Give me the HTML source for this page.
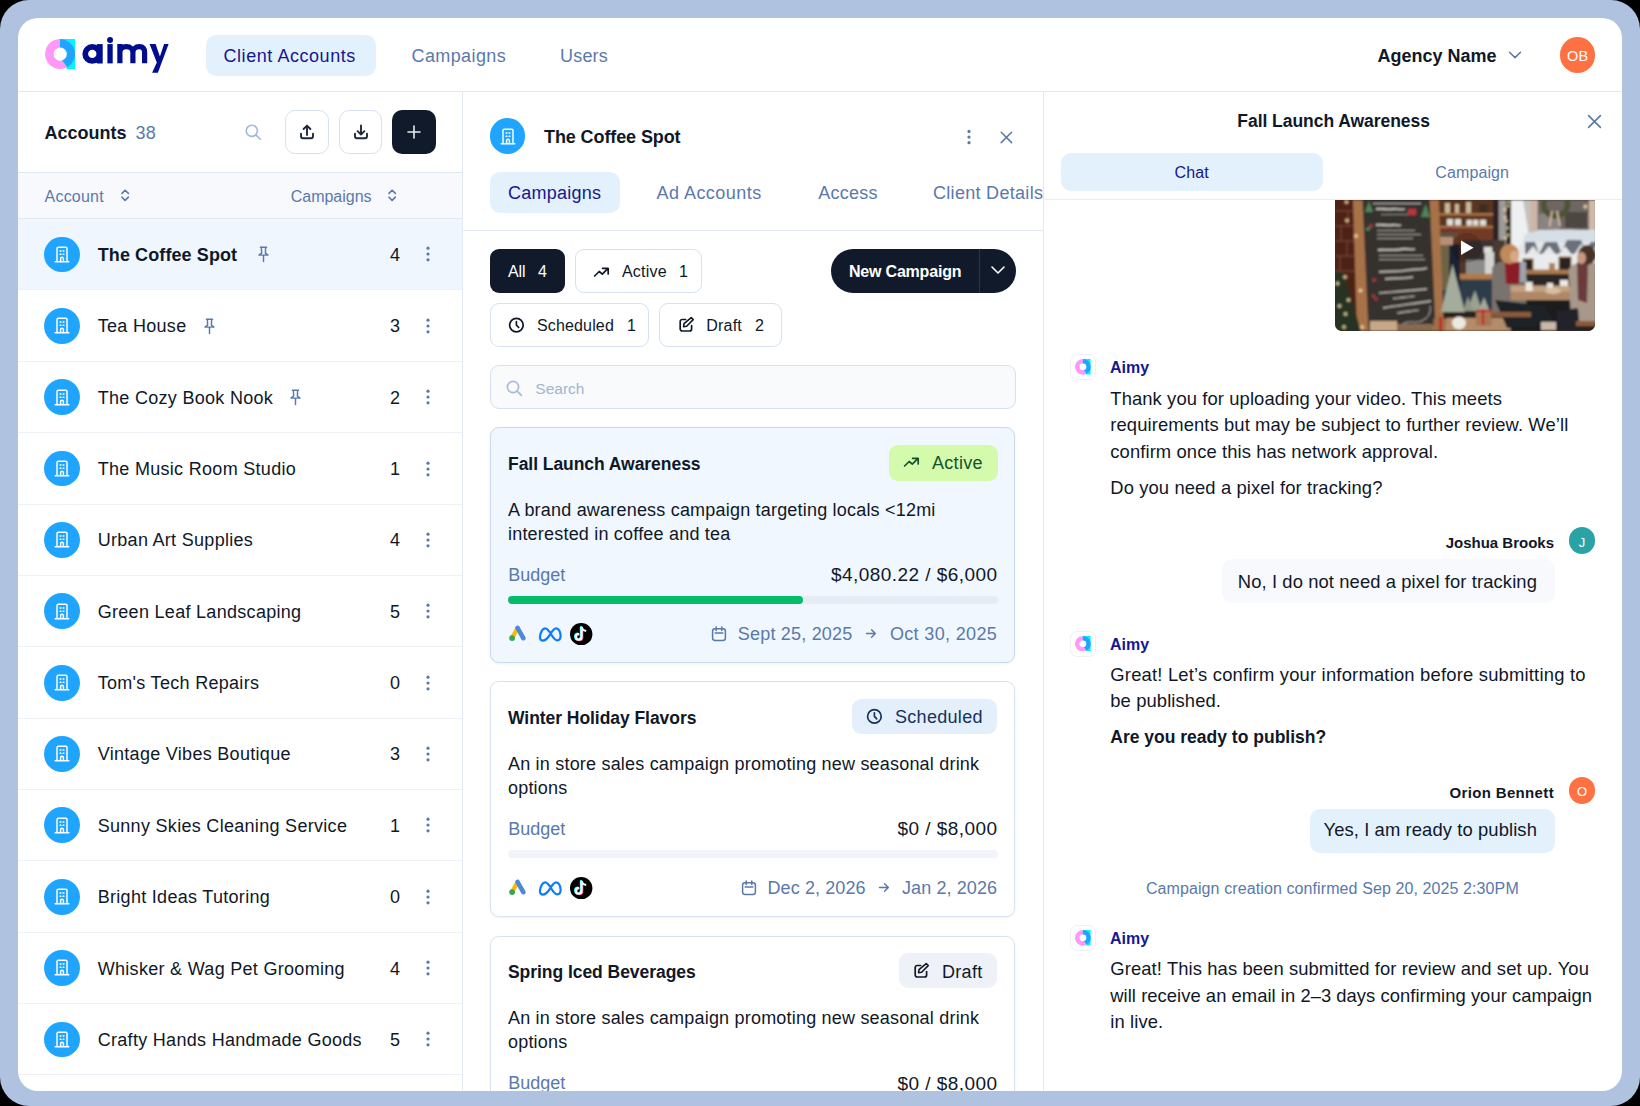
<!DOCTYPE html>
<html><head><meta charset="utf-8"><title>aimy</title>
<style>
html,body{margin:0;padding:0;}
body{width:1640px;height:1106px;overflow:hidden;background:#000;position:relative;font-family:"Liberation Sans",sans-serif;}
.frame{position:absolute;left:0;top:0;width:1640px;height:1106px;background:#afc3e1;border-radius:29px;}
.panel{position:absolute;left:18px;top:18px;width:1604px;height:1072.5px;background:#fff;border-radius:20px;overflow:hidden;}
.inner{position:absolute;left:-18px;top:-18px;width:1640px;height:1106px;}
.t{position:absolute;line-height:1;white-space:nowrap;}
.b{position:absolute;display:block;}
</style></head><body>
<div class="frame"></div>
<div class="panel"><div class="inner">
<svg class="b" style="left:45px;top:38.8px" width="30" height="30" viewBox="0 0 30 30"><g transform="scale(1.0)"><path d="M15 0 H30 V30 H21.5 V15 H15 Z" fill="#00f5ff"/><path d="M15 0 A15 15 0 1 0 22.2 28.2 L16.6 21.1 Z" fill="#ff99f7"/><path d="M15 0 A15 15 0 0 1 22.2 28.2 L16.6 21.1 L15 8.4 Z" fill="#1fa5ff"/><circle cx="15.2" cy="15.1" r="6.6" fill="#fff"/></g></svg>
<svg class="b" style="left:78px;top:34px" width="94" height="42" viewBox="0 0 94 42"><g fill="#000d8c" transform="translate(-78,-34)"><circle cx="92.3" cy="53.9" r="7.05" fill="none" stroke="#000d8c" stroke-width="5.7"/><rect x="96.9" y="44.1" width="5.8" height="19.4"/><rect x="107.4" y="44.1" width="5.3" height="19.3"/><circle cx="110.05" cy="39.9" r="3"/><path d="M119.9 63.3 V44.1 M119.9 52.6 C119.9 49 122.4 46.7 126.4 46.7 C130.4 46.7 132.9 49 132.9 52.6 V63.3 M132.9 52.6 C132.9 49 135.4 46.7 139.4 46.7 C143.4 46.7 144.6 49 144.6 52.6 V63.3" fill="none" stroke="#000d8c" stroke-width="5.2"/><path d="M149.6 44.1 H155.6 L159.9 56.6 L164.1 44.1 H168.6 L157.9 72.7 H152.1 L156.8 62.6 Z"/></g></svg>
<div class="b" style="left:206px;top:34.5px;width:170px;height:41px;background:#e3f1fd;border-radius:10px;"></div>
<div class="t" style="top:46.56px;font-size:18px;font-weight:400;color:#16178f;letter-spacing:0.55px;left:223.5px;">Client Accounts</div>
<div class="t" style="top:46.56px;font-size:18px;font-weight:400;color:#5a79ab;letter-spacing:0.4px;left:411.5px;">Campaigns</div>
<div class="t" style="top:46.56px;font-size:18px;font-weight:400;color:#5a79ab;letter-spacing:0.2px;left:560px;">Users</div>
<div class="t" style="top:46.86px;font-size:18px;font-weight:700;color:#101828;left:1377.5px;">Agency Name</div>
<svg class="b" style="left:1508px;top:50px" width="14" height="10" viewBox="0 0 14 10"><path d="M1.5 2.2 L7 7.6 L12.5 2.2" fill="none" stroke="#5a79ab" stroke-width="1.5" stroke-linecap="round" stroke-linejoin="round"/></svg>
<div class="b" style="left:1559.8px;top:37.2px;width:35.6px;height:35.6px;background:#ff7043;border-radius:50%;"></div>
<div class="t" style="top:48.53px;font-size:14.5px;font-weight:400;color:#fff;letter-spacing:0.2px;left:1177.6px;width:800px;text-align:center;">OB</div>
<div class="b" style="left:18px;top:91px;width:1604px;height:1px;background:#dfe7f2;"></div>
<div class="b" style="left:462px;top:91px;width:1px;height:1000px;background:#e3e9f2;"></div>
<div class="t" style="top:123.76px;font-size:18px;font-weight:700;color:#101828;left:44.6px;">Accounts</div>
<div class="t" style="top:123.76px;font-size:18px;font-weight:400;color:#5a79ab;letter-spacing:0.3px;left:135.5px;">38</div>
<svg class="b" style="left:245px;top:124px" width="17" height="17" viewBox="0 0 17 17"><circle cx="6.8" cy="6.8" r="5.6" fill="none" stroke="#a2b7d8" stroke-width="1.6"/><path d="M10.9 10.9 L15.3 15.3" stroke="#a2b7d8" stroke-width="1.6" stroke-linecap="round"/></svg>
<div class="b" style="left:285px;top:110px;width:43.6px;height:43.6px;box-sizing:border-box;border:1px solid #d6e1f1;border-radius:10px;background:#fff;"></div>
<div class="b" style="left:338.8px;top:110px;width:43.6px;height:43.6px;box-sizing:border-box;border:1px solid #d6e1f1;border-radius:10px;background:#fff;"></div>
<svg class="b" style="left:299px;top:124px" width="16" height="16" viewBox="0 0 16 16"><path d="M2 9.8 V12.2 A2 2 0 0 0 4 14.2 H12 A2 2 0 0 0 14 12.2 V9.8" fill="none" stroke="#1e293b" stroke-width="1.9" stroke-linecap="round"/><path d="M8 11 V1.6 M4.6 5 L8 1.6 L11.4 5" fill="none" stroke="#1e293b" stroke-width="1.9" stroke-linecap="round" stroke-linejoin="round"/></svg>
<svg class="b" style="left:352.8px;top:124px" width="16" height="16" viewBox="0 0 16 16"><path d="M2 9.8 V12.2 A2 2 0 0 0 4 14.2 H12 A2 2 0 0 0 14 12.2 V9.8" fill="none" stroke="#1e293b" stroke-width="1.9" stroke-linecap="round"/><path d="M8 1.4 V10.6 M4.6 7.2 L8 10.6 L11.4 7.2" fill="none" stroke="#1e293b" stroke-width="1.9" stroke-linecap="round" stroke-linejoin="round"/></svg>
<div class="b" style="left:391.8px;top:109.8px;width:44px;height:44px;background:#111a2b;border-radius:10px;"></div>
<svg class="b" style="left:405.8px;top:124px" width="16" height="16" viewBox="0 0 16 16"><path d="M8 2 V14 M2 8 H14" stroke="#e8ebf0" stroke-width="1.6" stroke-linecap="round"/></svg>
<div class="b" style="left:18px;top:172px;width:444px;height:1px;background:#e3e9f2;"></div>
<div class="b" style="left:18px;top:173px;width:444px;height:45px;background:#f7f9fc;"></div>
<div class="b" style="left:18px;top:218px;width:444px;height:1px;background:#e3e9f2;"></div>
<div class="t" style="top:188.96px;font-size:16px;font-weight:400;color:#5a79ab;letter-spacing:0.2px;left:44.6px;">Account</div>
<div class="t" style="top:188.96px;font-size:16px;font-weight:400;color:#5a79ab;left:290.7px;">Campaigns</div>
<svg class="b" style="left:120.2px;top:189px" width="10.4" height="12.6" viewBox="0 0 10.4 12.6"><path d="M2 4.4 L5.1 1.2 L8.4 4.4 M2 8.2 L5.1 11.4 L8.4 8.2" fill="none" stroke="#5a79ab" stroke-width="1.6" stroke-linecap="round" stroke-linejoin="round"/></svg>
<svg class="b" style="left:386.5px;top:189px" width="10.4" height="12.6" viewBox="0 0 10.4 12.6"><path d="M2 4.4 L5.1 1.2 L8.4 4.4 M2 8.2 L5.1 11.4 L8.4 8.2" fill="none" stroke="#5a79ab" stroke-width="1.6" stroke-linecap="round" stroke-linejoin="round"/></svg>
<div class="b" style="left:18px;top:219.1px;width:444px;height:70.36px;background:#eff6fe;"></div>
<div class="b" style="left:18px;top:289.46px;width:444px;height:1px;background:#edf1f7;"></div>
<div class="b" style="left:43.800000000000004px;top:236.57999999999998px;width:35.8px;height:35.8px;background:#1fa5ff;border-radius:50%;"></div>
<svg class="b" style="left:53.7px;top:245.88px" width="16.0" height="17.0" viewBox="0 0 16.0 17.0"><g transform="scale(1.0)" fill="none" stroke="#fff" stroke-width="1.45" stroke-linecap="round" stroke-linejoin="round"><path d="M3 15.6 V2.6 A1.3 1.3 0 0 1 4.3 1.3 H11.7 A1.3 1.3 0 0 1 13 2.6 V15.6"/><path d="M1.2 15.8 H14.8"/><path d="M6.1 4.9 H6.9 M9.1 4.9 H9.9 M6.1 8.2 H6.9 M9.1 8.2 H9.9"/><path d="M6.6 15.6 V12.6 A1.4 1.4 0 0 1 9.4 12.6 V15.6"/></g></svg>
<div class="t" style="top:245.94px;font-size:18px;font-weight:700;color:#101828;letter-spacing:0.1px;left:97.7px;">The Coffee Spot</div>
<svg class="b" style="left:256.5px;top:246.48px" width="13" height="17" viewBox="0 0 13 17"><path d="M3.4 1.2 H9.6 M4.4 1.4 L4.6 7.2 L2 9.1 H11 L8.4 7.2 L8.6 1.4 M6.5 9.4 V15.6" fill="none" stroke="#5a79ab" stroke-width="1.45" stroke-linecap="round" stroke-linejoin="round"/></svg>
<div class="t" style="top:245.94px;font-size:18px;font-weight:400;color:#101828;right:1240px;text-align:right;">4</div>
<svg class="b" style="left:424.5px;top:246.48px" width="6" height="16" viewBox="0 0 6 16"><circle cx="3" cy="2.2" r="1.6" fill="#5a79ab"/><circle cx="3" cy="8" r="1.6" fill="#5a79ab"/><circle cx="3" cy="13.8" r="1.6" fill="#5a79ab"/></svg>
<div class="b" style="left:18px;top:360.82px;width:444px;height:1px;background:#edf1f7;"></div>
<div class="b" style="left:43.800000000000004px;top:307.94px;width:35.8px;height:35.8px;background:#1fa5ff;border-radius:50%;"></div>
<svg class="b" style="left:53.7px;top:317.23999999999995px" width="16.0" height="17.0" viewBox="0 0 16.0 17.0"><g transform="scale(1.0)" fill="none" stroke="#fff" stroke-width="1.45" stroke-linecap="round" stroke-linejoin="round"><path d="M3 15.6 V2.6 A1.3 1.3 0 0 1 4.3 1.3 H11.7 A1.3 1.3 0 0 1 13 2.6 V15.6"/><path d="M1.2 15.8 H14.8"/><path d="M6.1 4.9 H6.9 M9.1 4.9 H9.9 M6.1 8.2 H6.9 M9.1 8.2 H9.9"/><path d="M6.6 15.6 V12.6 A1.4 1.4 0 0 1 9.4 12.6 V15.6"/></g></svg>
<div class="t" style="top:317.30px;font-size:18px;font-weight:400;color:#101828;letter-spacing:0.3px;left:97.7px;">Tea House</div>
<svg class="b" style="left:202.5px;top:317.84px" width="13" height="17" viewBox="0 0 13 17"><path d="M3.4 1.2 H9.6 M4.4 1.4 L4.6 7.2 L2 9.1 H11 L8.4 7.2 L8.6 1.4 M6.5 9.4 V15.6" fill="none" stroke="#5a79ab" stroke-width="1.45" stroke-linecap="round" stroke-linejoin="round"/></svg>
<div class="t" style="top:317.30px;font-size:18px;font-weight:400;color:#101828;right:1240px;text-align:right;">3</div>
<svg class="b" style="left:424.5px;top:317.84px" width="6" height="16" viewBox="0 0 6 16"><circle cx="3" cy="2.2" r="1.6" fill="#5a79ab"/><circle cx="3" cy="8" r="1.6" fill="#5a79ab"/><circle cx="3" cy="13.8" r="1.6" fill="#5a79ab"/></svg>
<div class="b" style="left:18px;top:432.18px;width:444px;height:1px;background:#edf1f7;"></div>
<div class="b" style="left:43.800000000000004px;top:379.3px;width:35.8px;height:35.8px;background:#1fa5ff;border-radius:50%;"></div>
<svg class="b" style="left:53.7px;top:388.59999999999997px" width="16.0" height="17.0" viewBox="0 0 16.0 17.0"><g transform="scale(1.0)" fill="none" stroke="#fff" stroke-width="1.45" stroke-linecap="round" stroke-linejoin="round"><path d="M3 15.6 V2.6 A1.3 1.3 0 0 1 4.3 1.3 H11.7 A1.3 1.3 0 0 1 13 2.6 V15.6"/><path d="M1.2 15.8 H14.8"/><path d="M6.1 4.9 H6.9 M9.1 4.9 H9.9 M6.1 8.2 H6.9 M9.1 8.2 H9.9"/><path d="M6.6 15.6 V12.6 A1.4 1.4 0 0 1 9.4 12.6 V15.6"/></g></svg>
<div class="t" style="top:388.66px;font-size:18px;font-weight:400;color:#101828;letter-spacing:0.3px;left:97.7px;">The Cozy Book Nook</div>
<svg class="b" style="left:288.5px;top:389.2px" width="13" height="17" viewBox="0 0 13 17"><path d="M3.4 1.2 H9.6 M4.4 1.4 L4.6 7.2 L2 9.1 H11 L8.4 7.2 L8.6 1.4 M6.5 9.4 V15.6" fill="none" stroke="#5a79ab" stroke-width="1.45" stroke-linecap="round" stroke-linejoin="round"/></svg>
<div class="t" style="top:388.66px;font-size:18px;font-weight:400;color:#101828;right:1240px;text-align:right;">2</div>
<svg class="b" style="left:424.5px;top:389.2px" width="6" height="16" viewBox="0 0 6 16"><circle cx="3" cy="2.2" r="1.6" fill="#5a79ab"/><circle cx="3" cy="8" r="1.6" fill="#5a79ab"/><circle cx="3" cy="13.8" r="1.6" fill="#5a79ab"/></svg>
<div class="b" style="left:18px;top:503.53999999999996px;width:444px;height:1px;background:#edf1f7;"></div>
<div class="b" style="left:43.800000000000004px;top:450.65999999999997px;width:35.8px;height:35.8px;background:#1fa5ff;border-radius:50%;"></div>
<svg class="b" style="left:53.7px;top:459.9599999999999px" width="16.0" height="17.0" viewBox="0 0 16.0 17.0"><g transform="scale(1.0)" fill="none" stroke="#fff" stroke-width="1.45" stroke-linecap="round" stroke-linejoin="round"><path d="M3 15.6 V2.6 A1.3 1.3 0 0 1 4.3 1.3 H11.7 A1.3 1.3 0 0 1 13 2.6 V15.6"/><path d="M1.2 15.8 H14.8"/><path d="M6.1 4.9 H6.9 M9.1 4.9 H9.9 M6.1 8.2 H6.9 M9.1 8.2 H9.9"/><path d="M6.6 15.6 V12.6 A1.4 1.4 0 0 1 9.4 12.6 V15.6"/></g></svg>
<div class="t" style="top:460.02px;font-size:18px;font-weight:400;color:#101828;letter-spacing:0.3px;left:97.7px;">The Music Room Studio</div>
<div class="t" style="top:460.02px;font-size:18px;font-weight:400;color:#101828;right:1240px;text-align:right;">1</div>
<svg class="b" style="left:424.5px;top:460.55999999999995px" width="6" height="16" viewBox="0 0 6 16"><circle cx="3" cy="2.2" r="1.6" fill="#5a79ab"/><circle cx="3" cy="8" r="1.6" fill="#5a79ab"/><circle cx="3" cy="13.8" r="1.6" fill="#5a79ab"/></svg>
<div class="b" style="left:18px;top:574.9px;width:444px;height:1px;background:#edf1f7;"></div>
<div class="b" style="left:43.800000000000004px;top:522.02px;width:35.8px;height:35.8px;background:#1fa5ff;border-radius:50%;"></div>
<svg class="b" style="left:53.7px;top:531.3199999999999px" width="16.0" height="17.0" viewBox="0 0 16.0 17.0"><g transform="scale(1.0)" fill="none" stroke="#fff" stroke-width="1.45" stroke-linecap="round" stroke-linejoin="round"><path d="M3 15.6 V2.6 A1.3 1.3 0 0 1 4.3 1.3 H11.7 A1.3 1.3 0 0 1 13 2.6 V15.6"/><path d="M1.2 15.8 H14.8"/><path d="M6.1 4.9 H6.9 M9.1 4.9 H9.9 M6.1 8.2 H6.9 M9.1 8.2 H9.9"/><path d="M6.6 15.6 V12.6 A1.4 1.4 0 0 1 9.4 12.6 V15.6"/></g></svg>
<div class="t" style="top:531.38px;font-size:18px;font-weight:400;color:#101828;letter-spacing:0.3px;left:97.7px;">Urban Art Supplies</div>
<div class="t" style="top:531.38px;font-size:18px;font-weight:400;color:#101828;right:1240px;text-align:right;">4</div>
<svg class="b" style="left:424.5px;top:531.92px" width="6" height="16" viewBox="0 0 6 16"><circle cx="3" cy="2.2" r="1.6" fill="#5a79ab"/><circle cx="3" cy="8" r="1.6" fill="#5a79ab"/><circle cx="3" cy="13.8" r="1.6" fill="#5a79ab"/></svg>
<div class="b" style="left:18px;top:646.26px;width:444px;height:1px;background:#edf1f7;"></div>
<div class="b" style="left:43.800000000000004px;top:593.38px;width:35.8px;height:35.8px;background:#1fa5ff;border-radius:50%;"></div>
<svg class="b" style="left:53.7px;top:602.68px" width="16.0" height="17.0" viewBox="0 0 16.0 17.0"><g transform="scale(1.0)" fill="none" stroke="#fff" stroke-width="1.45" stroke-linecap="round" stroke-linejoin="round"><path d="M3 15.6 V2.6 A1.3 1.3 0 0 1 4.3 1.3 H11.7 A1.3 1.3 0 0 1 13 2.6 V15.6"/><path d="M1.2 15.8 H14.8"/><path d="M6.1 4.9 H6.9 M9.1 4.9 H9.9 M6.1 8.2 H6.9 M9.1 8.2 H9.9"/><path d="M6.6 15.6 V12.6 A1.4 1.4 0 0 1 9.4 12.6 V15.6"/></g></svg>
<div class="t" style="top:602.74px;font-size:18px;font-weight:400;color:#101828;letter-spacing:0.3px;left:97.7px;">Green Leaf Landscaping</div>
<div class="t" style="top:602.74px;font-size:18px;font-weight:400;color:#101828;right:1240px;text-align:right;">5</div>
<svg class="b" style="left:424.5px;top:603.28px" width="6" height="16" viewBox="0 0 6 16"><circle cx="3" cy="2.2" r="1.6" fill="#5a79ab"/><circle cx="3" cy="8" r="1.6" fill="#5a79ab"/><circle cx="3" cy="13.8" r="1.6" fill="#5a79ab"/></svg>
<div class="b" style="left:18px;top:717.62px;width:444px;height:1px;background:#edf1f7;"></div>
<div class="b" style="left:43.800000000000004px;top:664.74px;width:35.8px;height:35.8px;background:#1fa5ff;border-radius:50%;"></div>
<svg class="b" style="left:53.7px;top:674.04px" width="16.0" height="17.0" viewBox="0 0 16.0 17.0"><g transform="scale(1.0)" fill="none" stroke="#fff" stroke-width="1.45" stroke-linecap="round" stroke-linejoin="round"><path d="M3 15.6 V2.6 A1.3 1.3 0 0 1 4.3 1.3 H11.7 A1.3 1.3 0 0 1 13 2.6 V15.6"/><path d="M1.2 15.8 H14.8"/><path d="M6.1 4.9 H6.9 M9.1 4.9 H9.9 M6.1 8.2 H6.9 M9.1 8.2 H9.9"/><path d="M6.6 15.6 V12.6 A1.4 1.4 0 0 1 9.4 12.6 V15.6"/></g></svg>
<div class="t" style="top:674.10px;font-size:18px;font-weight:400;color:#101828;letter-spacing:0.3px;left:97.7px;">Tom's Tech Repairs</div>
<div class="t" style="top:674.10px;font-size:18px;font-weight:400;color:#101828;right:1240px;text-align:right;">0</div>
<svg class="b" style="left:424.5px;top:674.64px" width="6" height="16" viewBox="0 0 6 16"><circle cx="3" cy="2.2" r="1.6" fill="#5a79ab"/><circle cx="3" cy="8" r="1.6" fill="#5a79ab"/><circle cx="3" cy="13.8" r="1.6" fill="#5a79ab"/></svg>
<div class="b" style="left:18px;top:788.98px;width:444px;height:1px;background:#edf1f7;"></div>
<div class="b" style="left:43.800000000000004px;top:736.1px;width:35.8px;height:35.8px;background:#1fa5ff;border-radius:50%;"></div>
<svg class="b" style="left:53.7px;top:745.4px" width="16.0" height="17.0" viewBox="0 0 16.0 17.0"><g transform="scale(1.0)" fill="none" stroke="#fff" stroke-width="1.45" stroke-linecap="round" stroke-linejoin="round"><path d="M3 15.6 V2.6 A1.3 1.3 0 0 1 4.3 1.3 H11.7 A1.3 1.3 0 0 1 13 2.6 V15.6"/><path d="M1.2 15.8 H14.8"/><path d="M6.1 4.9 H6.9 M9.1 4.9 H9.9 M6.1 8.2 H6.9 M9.1 8.2 H9.9"/><path d="M6.6 15.6 V12.6 A1.4 1.4 0 0 1 9.4 12.6 V15.6"/></g></svg>
<div class="t" style="top:745.46px;font-size:18px;font-weight:400;color:#101828;letter-spacing:0.3px;left:97.7px;">Vintage Vibes Boutique</div>
<div class="t" style="top:745.46px;font-size:18px;font-weight:400;color:#101828;right:1240px;text-align:right;">3</div>
<svg class="b" style="left:424.5px;top:746.0px" width="6" height="16" viewBox="0 0 6 16"><circle cx="3" cy="2.2" r="1.6" fill="#5a79ab"/><circle cx="3" cy="8" r="1.6" fill="#5a79ab"/><circle cx="3" cy="13.8" r="1.6" fill="#5a79ab"/></svg>
<div class="b" style="left:18px;top:860.34px;width:444px;height:1px;background:#edf1f7;"></div>
<div class="b" style="left:43.800000000000004px;top:807.46px;width:35.8px;height:35.8px;background:#1fa5ff;border-radius:50%;"></div>
<svg class="b" style="left:53.7px;top:816.76px" width="16.0" height="17.0" viewBox="0 0 16.0 17.0"><g transform="scale(1.0)" fill="none" stroke="#fff" stroke-width="1.45" stroke-linecap="round" stroke-linejoin="round"><path d="M3 15.6 V2.6 A1.3 1.3 0 0 1 4.3 1.3 H11.7 A1.3 1.3 0 0 1 13 2.6 V15.6"/><path d="M1.2 15.8 H14.8"/><path d="M6.1 4.9 H6.9 M9.1 4.9 H9.9 M6.1 8.2 H6.9 M9.1 8.2 H9.9"/><path d="M6.6 15.6 V12.6 A1.4 1.4 0 0 1 9.4 12.6 V15.6"/></g></svg>
<div class="t" style="top:816.82px;font-size:18px;font-weight:400;color:#101828;letter-spacing:0.3px;left:97.7px;">Sunny Skies Cleaning Service</div>
<div class="t" style="top:816.82px;font-size:18px;font-weight:400;color:#101828;right:1240px;text-align:right;">1</div>
<svg class="b" style="left:424.5px;top:817.36px" width="6" height="16" viewBox="0 0 6 16"><circle cx="3" cy="2.2" r="1.6" fill="#5a79ab"/><circle cx="3" cy="8" r="1.6" fill="#5a79ab"/><circle cx="3" cy="13.8" r="1.6" fill="#5a79ab"/></svg>
<div class="b" style="left:18px;top:931.7px;width:444px;height:1px;background:#edf1f7;"></div>
<div class="b" style="left:43.800000000000004px;top:878.82px;width:35.8px;height:35.8px;background:#1fa5ff;border-radius:50%;"></div>
<svg class="b" style="left:53.7px;top:888.12px" width="16.0" height="17.0" viewBox="0 0 16.0 17.0"><g transform="scale(1.0)" fill="none" stroke="#fff" stroke-width="1.45" stroke-linecap="round" stroke-linejoin="round"><path d="M3 15.6 V2.6 A1.3 1.3 0 0 1 4.3 1.3 H11.7 A1.3 1.3 0 0 1 13 2.6 V15.6"/><path d="M1.2 15.8 H14.8"/><path d="M6.1 4.9 H6.9 M9.1 4.9 H9.9 M6.1 8.2 H6.9 M9.1 8.2 H9.9"/><path d="M6.6 15.6 V12.6 A1.4 1.4 0 0 1 9.4 12.6 V15.6"/></g></svg>
<div class="t" style="top:888.18px;font-size:18px;font-weight:400;color:#101828;letter-spacing:0.3px;left:97.7px;">Bright Ideas Tutoring</div>
<div class="t" style="top:888.18px;font-size:18px;font-weight:400;color:#101828;right:1240px;text-align:right;">0</div>
<svg class="b" style="left:424.5px;top:888.72px" width="6" height="16" viewBox="0 0 6 16"><circle cx="3" cy="2.2" r="1.6" fill="#5a79ab"/><circle cx="3" cy="8" r="1.6" fill="#5a79ab"/><circle cx="3" cy="13.8" r="1.6" fill="#5a79ab"/></svg>
<div class="b" style="left:18px;top:1003.0600000000001px;width:444px;height:1px;background:#edf1f7;"></div>
<div class="b" style="left:43.800000000000004px;top:950.1800000000001px;width:35.8px;height:35.8px;background:#1fa5ff;border-radius:50%;"></div>
<svg class="b" style="left:53.7px;top:959.48px" width="16.0" height="17.0" viewBox="0 0 16.0 17.0"><g transform="scale(1.0)" fill="none" stroke="#fff" stroke-width="1.45" stroke-linecap="round" stroke-linejoin="round"><path d="M3 15.6 V2.6 A1.3 1.3 0 0 1 4.3 1.3 H11.7 A1.3 1.3 0 0 1 13 2.6 V15.6"/><path d="M1.2 15.8 H14.8"/><path d="M6.1 4.9 H6.9 M9.1 4.9 H9.9 M6.1 8.2 H6.9 M9.1 8.2 H9.9"/><path d="M6.6 15.6 V12.6 A1.4 1.4 0 0 1 9.4 12.6 V15.6"/></g></svg>
<div class="t" style="top:959.54px;font-size:18px;font-weight:400;color:#101828;letter-spacing:0.3px;left:97.7px;">Whisker &amp; Wag Pet Grooming</div>
<div class="t" style="top:959.54px;font-size:18px;font-weight:400;color:#101828;right:1240px;text-align:right;">4</div>
<svg class="b" style="left:424.5px;top:960.08px" width="6" height="16" viewBox="0 0 6 16"><circle cx="3" cy="2.2" r="1.6" fill="#5a79ab"/><circle cx="3" cy="8" r="1.6" fill="#5a79ab"/><circle cx="3" cy="13.8" r="1.6" fill="#5a79ab"/></svg>
<div class="b" style="left:18px;top:1074.42px;width:444px;height:1px;background:#edf1f7;"></div>
<div class="b" style="left:43.800000000000004px;top:1021.5400000000001px;width:35.8px;height:35.8px;background:#1fa5ff;border-radius:50%;"></div>
<svg class="b" style="left:53.7px;top:1030.8400000000001px" width="16.0" height="17.0" viewBox="0 0 16.0 17.0"><g transform="scale(1.0)" fill="none" stroke="#fff" stroke-width="1.45" stroke-linecap="round" stroke-linejoin="round"><path d="M3 15.6 V2.6 A1.3 1.3 0 0 1 4.3 1.3 H11.7 A1.3 1.3 0 0 1 13 2.6 V15.6"/><path d="M1.2 15.8 H14.8"/><path d="M6.1 4.9 H6.9 M9.1 4.9 H9.9 M6.1 8.2 H6.9 M9.1 8.2 H9.9"/><path d="M6.6 15.6 V12.6 A1.4 1.4 0 0 1 9.4 12.6 V15.6"/></g></svg>
<div class="t" style="top:1030.90px;font-size:18px;font-weight:400;color:#101828;letter-spacing:0.3px;left:97.7px;">Crafty Hands Handmade Goods</div>
<div class="t" style="top:1030.90px;font-size:18px;font-weight:400;color:#101828;right:1240px;text-align:right;">5</div>
<svg class="b" style="left:424.5px;top:1031.44px" width="6" height="16" viewBox="0 0 6 16"><circle cx="3" cy="2.2" r="1.6" fill="#5a79ab"/><circle cx="3" cy="8" r="1.6" fill="#5a79ab"/><circle cx="3" cy="13.8" r="1.6" fill="#5a79ab"/></svg>
<div class="b" style="left:1043px;top:91px;width:1px;height:1000px;background:#e3e9f2;"></div>
<div class="b" style="left:489.8px;top:118.3px;width:35.6px;height:35.6px;background:#1fa5ff;border-radius:50%;"></div>
<svg class="b" style="left:499.6px;top:127.5px" width="16.0" height="17.0" viewBox="0 0 16.0 17.0"><g transform="scale(1.0)" fill="none" stroke="#fff" stroke-width="1.45" stroke-linecap="round" stroke-linejoin="round"><path d="M3 15.6 V2.6 A1.3 1.3 0 0 1 4.3 1.3 H11.7 A1.3 1.3 0 0 1 13 2.6 V15.6"/><path d="M1.2 15.8 H14.8"/><path d="M6.1 4.9 H6.9 M9.1 4.9 H9.9 M6.1 8.2 H6.9 M9.1 8.2 H9.9"/><path d="M6.6 15.6 V12.6 A1.4 1.4 0 0 1 9.4 12.6 V15.6"/></g></svg>
<div class="t" style="top:128.36px;font-size:18px;font-weight:700;color:#101828;letter-spacing:-0.1px;left:544px;">The Coffee Spot</div>
<svg class="b" style="left:965.5px;top:128.5px" width="6" height="16" viewBox="0 0 6 16"><circle cx="3" cy="2.4" r="1.6" fill="#5a79ab"/><circle cx="3" cy="8.1" r="1.6" fill="#5a79ab"/><circle cx="3" cy="13.7" r="1.6" fill="#5a79ab"/></svg>
<svg class="b" style="left:998.5px;top:129.5px" width="15" height="15" viewBox="0 0 15 15"><path d="M2.2 2.2 L12.6 12.6 M12.6 2.2 L2.2 12.6" stroke="#5a79ab" stroke-width="1.5" stroke-linecap="round"/></svg>
<div class="b" style="left:490px;top:172.3px;width:130px;height:41px;background:#e3f1fd;border-radius:10px;"></div>
<div class="t" style="top:184.16px;font-size:18px;font-weight:400;color:#16178f;letter-spacing:0.25px;left:508px;">Campaigns</div>
<div class="t" style="top:184.16px;font-size:18px;font-weight:400;color:#5a79ab;letter-spacing:0.45px;left:656.6px;">Ad Accounts</div>
<div class="t" style="top:184.16px;font-size:18px;font-weight:400;color:#5a79ab;letter-spacing:0.25px;left:818.2px;">Access</div>
<div class="t" style="top:184.16px;font-size:18px;font-weight:400;color:#5a79ab;letter-spacing:0.3px;left:933px;">Client Details</div>
<div class="b" style="left:462px;top:230px;width:581px;height:1px;background:#e3e9f2;"></div>
<div class="b" style="left:489.8px;top:248.8px;width:75.7px;height:44.3px;background:#111a2b;border-radius:9px;"></div>
<div class="t" style="top:264.06px;font-size:16px;font-weight:400;color:#fff;left:507.9px;">All</div>
<div class="t" style="top:264.06px;font-size:16px;font-weight:400;color:#fff;left:538px;">4</div>
<div class="b" style="left:574.6px;top:248.8px;width:127.8px;height:44.3px;box-sizing:border-box;border:1px solid #d6e1f1;border-radius:9px;background:#fff;"></div>
<svg class="b" style="left:592.5px;top:264.5px" width="17" height="13" viewBox="0 0 17 13"><path d="M1.6 11 L6.2 6.5 L9.3 9.2 L15 3.4 M9.6 3.3 H15.2 V9" fill="none" stroke="#101828" stroke-width="1.7" stroke-linecap="round" stroke-linejoin="round"/></svg>
<div class="t" style="top:264.06px;font-size:16px;font-weight:400;color:#101828;letter-spacing:0.2px;left:622px;">Active</div>
<div class="t" style="top:264.06px;font-size:16px;font-weight:400;color:#101828;left:679px;">1</div>
<div class="b" style="left:490px;top:302.8px;width:159.4px;height:43.9px;box-sizing:border-box;border:1px solid #d6e1f1;border-radius:9px;background:#fff;"></div>
<svg class="b" style="left:508px;top:316.6px" width="17" height="17" viewBox="0 0 17 17"><circle cx="8.4" cy="8.1" r="6.8" fill="none" stroke="#101828" stroke-width="1.7"/><path d="M8.4 4.5 V8.1 L10.7 10.5" fill="none" stroke="#101828" stroke-width="1.7" stroke-linecap="round" stroke-linejoin="round"/></svg>
<div class="t" style="top:318.06px;font-size:16px;font-weight:400;color:#101828;letter-spacing:0.15px;left:537px;">Scheduled</div>
<div class="t" style="top:318.06px;font-size:16px;font-weight:400;color:#101828;left:627px;">1</div>
<div class="b" style="left:659.1px;top:302.8px;width:123.3px;height:43.9px;box-sizing:border-box;border:1px solid #d6e1f1;border-radius:9px;background:#fff;"></div>
<svg class="b" style="left:678px;top:316px" width="17" height="17" viewBox="0 0 17 17"><path d="M7.6 3.5 H4.2 A2 2 0 0 0 2.2 5.5 V13 A2 2 0 0 0 4.2 15 H11.6 A2 2 0 0 0 13.6 13 V9.6" fill="none" stroke="#101828" stroke-width="1.7" stroke-linecap="round" stroke-linejoin="round"/><path d="M13.2 1.6 L15.2 3.6 L8.6 10.2 L5.6 10.6 L6 7.6 Z" fill="none" stroke="#101828" stroke-width="1.6" stroke-linejoin="round"/></svg>
<div class="t" style="top:318.06px;font-size:16px;font-weight:400;color:#101828;letter-spacing:0.2px;left:706.3px;">Draft</div>
<div class="t" style="top:318.06px;font-size:16px;font-weight:400;color:#101828;left:755px;">2</div>
<div class="b" style="left:830.6px;top:249px;width:185.2px;height:44.4px;background:#111a2b;border-radius:22.2px;"></div>
<div class="b" style="left:979px;top:249px;width:1px;height:44.4px;background:#2b3547;"></div>
<div class="t" style="top:264.16px;font-size:16px;font-weight:700;color:#fff;letter-spacing:-0.2px;left:849px;">New Campaign</div>
<svg class="b" style="left:990px;top:265px" width="16" height="10" viewBox="0 0 16 10"><path d="M2 2 L8 8 L14 2" fill="none" stroke="#fff" stroke-width="1.6" stroke-linecap="round" stroke-linejoin="round"/></svg>
<div class="b" style="left:490px;top:365.3px;width:525.6px;height:43.6px;box-sizing:border-box;border:1px solid #d6e1f1;border-radius:9px;background:#f8fafc;"></div>
<svg class="b" style="left:505.5px;top:379.5px" width="17" height="17" viewBox="0 0 17 17"><circle cx="7" cy="7" r="5.6" fill="none" stroke="#a6b9d8" stroke-width="1.6"/><path d="M11.1 11.1 L15.4 15.4" stroke="#a6b9d8" stroke-width="1.6" stroke-linecap="round"/></svg>
<div class="t" style="top:380.58px;font-size:15.5px;font-weight:400;color:#a3b4cf;left:535.3px;">Search</div>
<div class="b" style="left:490px;top:427.3px;width:525.4px;height:235.8px;box-sizing:border-box;border:1px solid #cad9ec;border-radius:9px;background:#f0f7fe;box-shadow:0 1px 3px rgba(16,24,40,0.06);"></div>
<div class="t" style="top:455.69px;font-size:17.5px;font-weight:700;color:#101828;letter-spacing:-0.05px;left:508px;">Fall Launch Awareness</div>
<div class="t" style="top:501.26px;font-size:18px;font-weight:400;color:#101828;letter-spacing:0.2px;left:508px;">A brand awareness campaign targeting locals &lt;12mi</div>
<div class="t" style="top:524.86px;font-size:18px;font-weight:400;color:#101828;letter-spacing:0.2px;left:508px;">interested in coffee and tea</div>
<div class="t" style="top:566.26px;font-size:18px;font-weight:400;color:#5a79ab;left:508.2px;">Budget</div>
<div class="t" style="top:565.42px;font-size:19px;font-weight:400;color:#101828;letter-spacing:0.45px;right:642.5px;text-align:right;">$4,080.22 / $6,000</div>
<div class="b" style="left:507.6px;top:595.6px;width:490.5px;height:8.8px;background:#e6ecf5;border-radius:5px;"></div>
<div class="b" style="left:507.6px;top:595.6px;width:295px;height:8.8px;background:#04bb6a;border-radius:5px;"></div>
<svg class="b" style="left:507px;top:625.1px" width="22" height="18" viewBox="0 0 22 18"><path d="M10.6 3 L5.2 12.8" stroke="#fbbc04" stroke-width="4.3" stroke-linecap="round"/><path d="M10.6 3 L16.3 13.2" stroke="#4a8ad8" stroke-width="4.6" stroke-linecap="round"/><circle cx="5.1" cy="13.1" r="2.9" fill="#34a853"/></svg>
<svg class="b" style="left:537.5px;top:626.1px" width="25" height="17" viewBox="0 0 25 17"><path d="M4.6 14.6 C2.6 14.6 1.8 12.6 2 10.6 C2.4 6.4 4.6 2.4 7.2 2.4 C9.6 2.4 11.4 5.4 13.4 8.8 C15.2 11.8 16.8 14.4 19.2 14.4 C21.4 14.4 22.6 12.4 22.6 9.8 C22.6 6 20.8 2.4 18.2 2.4 C15.8 2.4 14 5.2 12 8.6 C10 12 8 14.6 4.6 14.6 Z" fill="none" stroke="#0a7cff" stroke-width="2.2" stroke-linejoin="round"/></svg>
<svg class="b" style="left:570.2px;top:622.9px" width="22.4" height="22.4" viewBox="0 0 22.4 22.4"><circle cx="11.2" cy="11.2" r="11.2" fill="#000"/><g fill="none" stroke-width="2.2" stroke-linecap="round"><path d="M11.6 4.6 V13.8 A2.9 2.9 0 1 1 8.2 11" stroke="#25f4ee" transform="translate(-0.7,-0.4)"/><path d="M11.6 4.6 V13.8 A2.9 2.9 0 1 1 8.2 11" stroke="#fe2c55" transform="translate(0.7,0.5)"/><path d="M11.6 4.6 V13.8 A2.9 2.9 0 1 1 8.2 11" stroke="#fff"/><path d="M11.8 4.8 C12.4 6.6 13.6 7.6 15.4 7.8" stroke="#fff" stroke-width="2"/></g></svg>
<div class="b" style="left:889.2px;top:445.2px;width:108.5px;height:35.4px;background:#d3fbab;border-radius:9px;"></div>
<svg class="b" style="left:902.5px;top:455.3px" width="17" height="13" viewBox="0 0 17 13"><path d="M1.6 11 L6.2 6.5 L9.3 9.2 L15 3.4 M9.6 3.3 H15.2 V9" fill="none" stroke="#14532d" stroke-width="1.7" stroke-linecap="round" stroke-linejoin="round"/></svg>
<div class="t" style="top:454.46px;font-size:18px;font-weight:400;color:#14532d;letter-spacing:0.3px;left:932px;">Active</div>
<svg class="b" style="left:711.2px;top:625.9px" width="16" height="16" viewBox="0 0 16 16"><rect x="1.6" y="2.8" width="12.8" height="11.6" rx="2.4" fill="none" stroke="#5a79ab" stroke-width="1.5"/><path d="M5.2 1 V4.4 M10.8 1 V4.4 M4.2 6.9 H11.8" stroke="#5a79ab" stroke-width="1.5" stroke-linecap="round"/></svg>
<div class="t" style="top:625.46px;font-size:18px;font-weight:400;color:#5a79ab;letter-spacing:0.2px;left:737.8px;">Sept 25, 2025</div>
<svg class="b" style="left:865px;top:628.4px" width="12" height="11" viewBox="0 0 12 11"><path d="M1.5 5.5 H10.2 M6.6 1.8 L10.3 5.5 L6.6 9.2" fill="none" stroke="#5a79ab" stroke-width="1.5" stroke-linecap="round" stroke-linejoin="round"/></svg>
<div class="t" style="top:625.46px;font-size:18px;font-weight:400;color:#5a79ab;letter-spacing:0.35px;right:642.8px;text-align:right;">Oct 30, 2025</div>
<div class="b" style="left:490px;top:681.3px;width:525.4px;height:235.8px;box-sizing:border-box;border:1px solid #d9e3f0;border-radius:9px;background:#fff;box-shadow:0 1px 3px rgba(16,24,40,0.06);"></div>
<div class="t" style="top:709.69px;font-size:17.5px;font-weight:700;color:#101828;letter-spacing:-0.05px;left:508px;">Winter Holiday Flavors</div>
<div class="t" style="top:755.26px;font-size:18px;font-weight:400;color:#101828;letter-spacing:0.2px;left:508px;">An in store sales campaign promoting new seasonal drink</div>
<div class="t" style="top:778.86px;font-size:18px;font-weight:400;color:#101828;letter-spacing:0.2px;left:508px;">options</div>
<div class="t" style="top:820.26px;font-size:18px;font-weight:400;color:#5a79ab;left:508.2px;">Budget</div>
<div class="t" style="top:819.42px;font-size:19px;font-weight:400;color:#101828;letter-spacing:0.45px;right:642.5px;text-align:right;">$0 / $8,000</div>
<div class="b" style="left:507.6px;top:849.5999999999999px;width:490.5px;height:8.8px;background:#f1f4f9;border-radius:5px;"></div>
<svg class="b" style="left:507px;top:879.0999999999999px" width="22" height="18" viewBox="0 0 22 18"><path d="M10.6 3 L5.2 12.8" stroke="#fbbc04" stroke-width="4.3" stroke-linecap="round"/><path d="M10.6 3 L16.3 13.2" stroke="#4a8ad8" stroke-width="4.6" stroke-linecap="round"/><circle cx="5.1" cy="13.1" r="2.9" fill="#34a853"/></svg>
<svg class="b" style="left:537.5px;top:880.0999999999999px" width="25" height="17" viewBox="0 0 25 17"><path d="M4.6 14.6 C2.6 14.6 1.8 12.6 2 10.6 C2.4 6.4 4.6 2.4 7.2 2.4 C9.6 2.4 11.4 5.4 13.4 8.8 C15.2 11.8 16.8 14.4 19.2 14.4 C21.4 14.4 22.6 12.4 22.6 9.8 C22.6 6 20.8 2.4 18.2 2.4 C15.8 2.4 14 5.2 12 8.6 C10 12 8 14.6 4.6 14.6 Z" fill="none" stroke="#0a7cff" stroke-width="2.2" stroke-linejoin="round"/></svg>
<svg class="b" style="left:570.2px;top:876.8999999999999px" width="22.4" height="22.4" viewBox="0 0 22.4 22.4"><circle cx="11.2" cy="11.2" r="11.2" fill="#000"/><g fill="none" stroke-width="2.2" stroke-linecap="round"><path d="M11.6 4.6 V13.8 A2.9 2.9 0 1 1 8.2 11" stroke="#25f4ee" transform="translate(-0.7,-0.4)"/><path d="M11.6 4.6 V13.8 A2.9 2.9 0 1 1 8.2 11" stroke="#fe2c55" transform="translate(0.7,0.5)"/><path d="M11.6 4.6 V13.8 A2.9 2.9 0 1 1 8.2 11" stroke="#fff"/><path d="M11.8 4.8 C12.4 6.6 13.6 7.6 15.4 7.8" stroke="#fff" stroke-width="2"/></g></svg>
<div class="b" style="left:852.4px;top:699.1999999999999px;width:145.1px;height:35.1px;background:#e3f0fc;border-radius:9px;"></div>
<svg class="b" style="left:865.5px;top:708.4px" width="17" height="17" viewBox="0 0 17 17"><circle cx="8.4" cy="8.4" r="6.8" fill="none" stroke="#17305c" stroke-width="1.7"/><path d="M8.4 4.8 V8.4 L10.7 10.8" fill="none" stroke="#17305c" stroke-width="1.7" stroke-linecap="round" stroke-linejoin="round"/></svg>
<div class="t" style="top:708.46px;font-size:18px;font-weight:400;color:#17305c;letter-spacing:0.3px;left:895px;">Scheduled</div>
<svg class="b" style="left:740.8px;top:879.9px" width="16" height="16" viewBox="0 0 16 16"><rect x="1.6" y="2.8" width="12.8" height="11.6" rx="2.4" fill="none" stroke="#5a79ab" stroke-width="1.5"/><path d="M5.2 1 V4.4 M10.8 1 V4.4 M4.2 6.9 H11.8" stroke="#5a79ab" stroke-width="1.5" stroke-linecap="round"/></svg>
<div class="t" style="top:879.46px;font-size:18px;font-weight:400;color:#5a79ab;letter-spacing:0.1px;left:767.5px;">Dec 2, 2026</div>
<svg class="b" style="left:877.5px;top:882.4px" width="12" height="11" viewBox="0 0 12 11"><path d="M1.5 5.5 H10.2 M6.6 1.8 L10.3 5.5 L6.6 9.2" fill="none" stroke="#5a79ab" stroke-width="1.5" stroke-linecap="round" stroke-linejoin="round"/></svg>
<div class="t" style="top:879.46px;font-size:18px;font-weight:400;color:#5a79ab;letter-spacing:0.1px;right:642.8px;text-align:right;">Jan 2, 2026</div>
<div class="b" style="left:490px;top:935.5px;width:525.4px;height:235.8px;box-sizing:border-box;border:1px solid #d9e3f0;border-radius:9px;background:#fff;box-shadow:0 1px 3px rgba(16,24,40,0.06);"></div>
<div class="t" style="top:963.89px;font-size:17.5px;font-weight:700;color:#101828;letter-spacing:-0.05px;left:508px;">Spring Iced Beverages</div>
<div class="t" style="top:1009.46px;font-size:18px;font-weight:400;color:#101828;letter-spacing:0.2px;left:508px;">An in store sales campaign promoting new seasonal drink</div>
<div class="t" style="top:1033.06px;font-size:18px;font-weight:400;color:#101828;letter-spacing:0.2px;left:508px;">options</div>
<div class="t" style="top:1074.46px;font-size:18px;font-weight:400;color:#5a79ab;left:508.2px;">Budget</div>
<div class="t" style="top:1073.62px;font-size:19px;font-weight:400;color:#101828;letter-spacing:0.45px;right:642.5px;text-align:right;">$0 / $8,000</div>
<div class="b" style="left:507.6px;top:1103.8px;width:490.5px;height:8.8px;background:#f1f4f9;border-radius:5px;"></div>
<svg class="b" style="left:507px;top:1133.3px" width="22" height="18" viewBox="0 0 22 18"><path d="M10.6 3 L5.2 12.8" stroke="#fbbc04" stroke-width="4.3" stroke-linecap="round"/><path d="M10.6 3 L16.3 13.2" stroke="#4a8ad8" stroke-width="4.6" stroke-linecap="round"/><circle cx="5.1" cy="13.1" r="2.9" fill="#34a853"/></svg>
<svg class="b" style="left:537.5px;top:1134.3px" width="25" height="17" viewBox="0 0 25 17"><path d="M4.6 14.6 C2.6 14.6 1.8 12.6 2 10.6 C2.4 6.4 4.6 2.4 7.2 2.4 C9.6 2.4 11.4 5.4 13.4 8.8 C15.2 11.8 16.8 14.4 19.2 14.4 C21.4 14.4 22.6 12.4 22.6 9.8 C22.6 6 20.8 2.4 18.2 2.4 C15.8 2.4 14 5.2 12 8.6 C10 12 8 14.6 4.6 14.6 Z" fill="none" stroke="#0a7cff" stroke-width="2.2" stroke-linejoin="round"/></svg>
<svg class="b" style="left:570.2px;top:1131.1px" width="22.4" height="22.4" viewBox="0 0 22.4 22.4"><circle cx="11.2" cy="11.2" r="11.2" fill="#000"/><g fill="none" stroke-width="2.2" stroke-linecap="round"><path d="M11.6 4.6 V13.8 A2.9 2.9 0 1 1 8.2 11" stroke="#25f4ee" transform="translate(-0.7,-0.4)"/><path d="M11.6 4.6 V13.8 A2.9 2.9 0 1 1 8.2 11" stroke="#fe2c55" transform="translate(0.7,0.5)"/><path d="M11.6 4.6 V13.8 A2.9 2.9 0 1 1 8.2 11" stroke="#fff"/><path d="M11.8 4.8 C12.4 6.6 13.6 7.6 15.4 7.8" stroke="#fff" stroke-width="2"/></g></svg>
<div class="b" style="left:899.2px;top:953.4px;width:98.3px;height:34.5px;background:#eef2f8;border-radius:9px;"></div>
<svg class="b" style="left:912.8px;top:962.0px" width="17" height="17" viewBox="0 0 17 17"><path d="M7.6 3.5 H4.2 A2 2 0 0 0 2.2 5.5 V13 A2 2 0 0 0 4.2 15 H11.6 A2 2 0 0 0 13.6 13 V9.6" fill="none" stroke="#101828" stroke-width="1.7" stroke-linecap="round" stroke-linejoin="round"/><path d="M13.2 1.6 L15.2 3.6 L8.6 10.2 L5.6 10.6 L6 7.6 Z" fill="none" stroke="#101828" stroke-width="1.6" stroke-linejoin="round"/></svg>
<div class="t" style="top:962.66px;font-size:18px;font-weight:400;color:#101828;letter-spacing:0.3px;left:942px;">Draft</div>
<div class="t" style="top:113.49px;font-size:17.5px;font-weight:700;color:#101828;letter-spacing:-0.05px;left:933.5999999999999px;width:800px;text-align:center;">Fall Launch Awareness</div>
<svg class="b" style="left:1586.5px;top:114.2px" width="15" height="15" viewBox="0 0 15 15"><path d="M1.6 1.6 L13.4 13.4 M13.4 1.6 L1.6 13.4" stroke="#5a79ab" stroke-width="1.6" stroke-linecap="round"/></svg>
<div class="b" style="left:1060.8px;top:153.1px;width:262.5px;height:37.6px;background:#e3f1fd;border-radius:10px;"></div>
<div class="t" style="top:164.76px;font-size:16px;font-weight:400;color:#16178f;letter-spacing:0.1px;left:791.5999999999999px;width:800px;text-align:center;">Chat</div>
<div class="t" style="top:164.76px;font-size:16px;font-weight:400;color:#5a79ab;letter-spacing:0.1px;left:1072.2px;width:800px;text-align:center;">Campaign</div>
<div class="b" style="left:1043px;top:199px;width:579px;height:1px;background:#e8edf4;"></div>
<div class="b" style="left:1334.5px;top:200px;width:260.5px;height:131px;overflow:hidden;border-radius:0 0 7px 7px;background:#3a2a22;"><svg width="261" height="131" viewBox="0 0 261 131" style="display:block">
<defs>
<filter id="bl" x="-2%" y="-2%" width="104%" height="104%"><feGaussianBlur stdDeviation="1"/></filter>
<radialGradient id="lt"><stop offset="0" stop-color="#fff3c0"/><stop offset="1" stop-color="#ffd890" stop-opacity="0"/></radialGradient>
</defs>
<g filter="url(#bl)">
<rect width="261" height="131" fill="#2a201c"/>
<!-- brick -->
<rect x="0" y="0" width="22" height="131" fill="#4e2419"/>
<g stroke="#6e3e2c" stroke-width="1.4"><path d="M0 11 H20 M0 26 H20 M0 41 H20 M0 56 H20 M0 71 H20"/><path d="M6 26 V41 M12 41 V56 M5 56 V71 M13 11 V26"/></g>
<!-- shelves area -->
<rect x="103" y="0" width="74" height="74" fill="#5a3422"/>
<rect x="103" y="28" width="56" height="20" fill="#733a26"/>
<g fill="#c8b898"><rect x="110" y="3" width="5" height="10"/><rect x="120" y="4" width="4" height="9"/><rect x="131" y="2" width="5" height="11"/><rect x="144" y="4" width="9" height="9" fill="#3e2e24"/></g>
<rect x="103" y="13.3" width="56" height="2.2" fill="#b07a48"/>
<rect x="103" y="25.8" width="56" height="2.2" fill="#a8743f"/>
<g fill="#e2ddd4"><rect x="112" y="19" width="6" height="6.5"/><rect x="120" y="19" width="6" height="6.5"/><rect x="131.5" y="19.7" width="5.5" height="6"/><rect x="138" y="19.7" width="5.5" height="6"/><rect x="145" y="19.7" width="6" height="6"/></g>
<!-- pillars -->
<rect x="158" y="0" width="6" height="48" fill="#2a2220"/>
<rect x="163.7" y="0" width="7.3" height="45" fill="#9c9a9a"/>
<rect x="171" y="0" width="5.5" height="46" fill="#2e2622"/>
<g fill="url(#lt)"><circle cx="173.5" cy="2" r="2.4"/><circle cx="173" cy="6" r="2.4"/><circle cx="170" cy="9.5" r="2.4"/><circle cx="170" cy="17.5" r="2.4"/><circle cx="171.5" cy="21" r="2.4"/><circle cx="172.5" cy="28" r="2.4"/><circle cx="173" cy="35" r="2.4"/><circle cx="170.5" cy="38" r="2.4"/></g>
<!-- window -->
<rect x="176.2" y="0" width="85" height="72" fill="#e4e6e8"/>
<rect x="188" y="0" width="14" height="38" fill="#c4c2c0"/>
<rect x="202" y="0" width="52" height="30" fill="#6e6662"/>
<rect x="204" y="14" width="20" height="16" fill="#8a8480"/><rect x="230" y="12" width="22" height="16" fill="#4e4642"/>
<circle cx="250.4" cy="6.6" r="3.2" fill="url(#lt)"/>
<rect x="195.5" y="0" width="7.2" height="42" fill="#cdb6a6"/>
<rect x="254" y="0" width="7" height="30" fill="#cfb9aa"/>
<path d="M176.2 0 H188 L194 36 L176.2 54 Z" fill="#eef0f2"/>
<path d="M190 34 C205 28 240 29 261 31 V42 H188 Z" fill="#d6dee6"/>
<path d="M190 42 L200 42 L204 54 L210 42 L222 42 L226 52 L232 40 L246 40 L250 50 L256 42 L261 42 V46 L254 56 L246 44 L238 56 L230 46 L222 56 L214 46 L206 56 L198 46 L190 56 Z" fill="#6a707c"/>
<rect x="176.2" y="54" width="85" height="18" fill="#eaebec"/>
<!-- wreath -->
<circle cx="220.6" cy="4" r="12" fill="none" stroke="#4c5434" stroke-width="5.5"/>
<path d="M217 11 L214.5 26.5 M222 11 L225 26.5" stroke="#dcbcac" stroke-width="1.7"/>
<!-- sill + signs -->
<rect x="176.2" y="69.6" width="85" height="4.8" fill="#a87850"/>
<rect x="188" y="59" width="10" height="11" fill="#2a2420" stroke="#9a6c44" stroke-width="1"/>
<rect x="224" y="57" width="12" height="13" fill="#2a2420" stroke="#9a6c44" stroke-width="1"/>
<rect x="214" y="63" width="6" height="7" fill="#b08258"/>
<rect x="176" y="74.4" width="85" height="12" fill="#2c2826"/>
<!-- coffee machines -->
<rect x="129" y="40" width="29" height="34" fill="#3a3230"/>
<rect x="131" y="60" width="19" height="14" fill="#8e8c8a"/>
<rect x="149" y="47" width="8" height="6" fill="#e0ddd8"/>
<rect x="158" y="40" width="12" height="26" fill="#4a3a32"/>
<rect x="150" y="52" width="9" height="22" fill="#d4d4d4"/>
<!-- counter -->
<rect x="103" y="73.8" width="56" height="6" fill="#b07a48"/>
<rect x="103" y="79.7" width="55" height="30" fill="#2e3a4a"/>
<!-- barista -->
<rect x="112" y="44" width="13" height="46" fill="#1c2430"/>
<rect x="104" y="44" width="10" height="46" fill="#6e6444"/>
<rect x="104" y="37" width="14" height="8" fill="#b8907a"/>
<path d="M104 37 C105 29 112 26.5 118 28 C123 29.5 124 34 123 37 Z" fill="#7a3030"/>
<rect x="104" y="33" width="19" height="3.5" fill="#4a5a3a"/>
<!-- chalkboard frame and board -->
<path d="M18 0 L103.7 0 L109 131 L22 131 Z" fill="#a87248"/>
<path d="M27.5 0 L94.7 0 L100.5 126 L33.5 131 Z" fill="#34302d"/>
<g stroke="#dedad2" fill="none" opacity="0.85">
<path d="M38 3.5 H86" stroke-width="0.9"/>
<path d="M41 9 C46 8 52 10 58 9 C62 8.5 66 10 70 9" stroke-width="1.8"/>
<path d="M46 14.5 H76" stroke-width="0.8" opacity="0.7"/>
<path d="M41 25 C46 24 52 26 58 25 C61 24.5 63 26 66 25" stroke-width="1.8"/>
<path d="M42 30.5 H80 M42 34.5 H86 M42 38.5 H78" stroke-width="0.9" opacity="0.8"/>
<path d="M43 50 C50 49 58 51 68 49 C72 48.5 76 50 80 49" stroke-width="1.8"/>
<path d="M44 55.5 H88 M44 59.5 H90" stroke-width="0.9" opacity="0.8"/>
<path d="M44 72 C54 71 64 72 74 70 C80 69 86 70 92 68" stroke-width="1.7"/>
<path d="M50 79 C58 78 68 79 78 77" stroke-width="1.7"/>
<path d="M44 93 C56 92 70 91 92 89" stroke-width="1.3"/>
<path d="M58 98.5 C64 98 72 97 80 96" stroke-width="1.2"/>
<path d="M48 108 C60 106 76 104 96 101" stroke-width="1.3"/>
<path d="M62 113 C68 112.5 76 111 84 110" stroke-width="1.2"/>
<path d="M52 126 C58 122 64 127 70 123 C76 120 82 125 90 119 C94 116 96 112 95 106" stroke-width="0.9"/>
</g>
<g fill="#c0323a"><circle cx="36" cy="26" r="1.8"/><circle cx="38.5" cy="96" r="1.6"/><circle cx="41" cy="99" r="1.6"/><rect x="73" y="9" width="8" height="6"/><circle cx="39" cy="80" r="1.8"/></g>
<g fill="#4e8458"><path d="M30 12 L34 1 L38 12 Z"/><path d="M86 17 L90.5 4 L95 17 Z"/><circle cx="33" cy="29" r="2"/></g>
<!-- left tree -->
<path d="M0 72 L8 72 L26 131 L0 131 Z" fill="#263024"/>
<g fill="url(#lt)"><circle cx="11.5" cy="2" r="3"/><circle cx="12" cy="20.5" r="3"/><circle cx="21" cy="36" r="3"/><circle cx="10" cy="77" r="3"/><circle cx="2.5" cy="83.5" r="3"/><circle cx="25.5" cy="90.5" r="3"/><circle cx="13.5" cy="100" r="3"/><circle cx="4.5" cy="106" r="3"/><circle cx="10.5" cy="114" r="3"/><circle cx="27" cy="127" r="3"/><circle cx="9" cy="127" r="3"/></g>
<rect x="35" y="121" width="27" height="10" fill="#c8a888"/>
<rect x="62" y="124" width="36" height="7" fill="#8a6a50"/>
<!-- center trees -->
<path d="M117.5 64 L130 112 L106 112 Z" fill="#a4ac9c"/>
<path d="M140 90 L147 111 L132 111 Z" fill="#9aa290"/>
<path d="M149 97 L155 112 L143 112 Z" fill="#a2aa98"/>
<path d="M133 96 L138 111 L128 111 Z" fill="#8e9686"/>
<!-- gifts & foreground -->
<rect x="98.5" y="118.5" width="16" height="12.5" fill="#a0704a"/>
<rect x="104" y="117" width="3" height="14" fill="#c0202a"/>
<path d="M112 118 H185 V131 H110 Z" fill="#b48c6a"/>
<rect x="141" y="109.6" width="15.6" height="16" fill="#a87450"/>
<path d="M141 111 H157 M148 109 V125" stroke="#c0202a" stroke-width="2.2"/>
<ellipse cx="124" cy="123" rx="7" ry="6.5" fill="#ece8e2"/>
<!-- table middle + under -->
<rect x="175.7" y="100" width="62" height="31" fill="#1e1a1a"/>
<!-- woman 1 -->
<path d="M157 68 C160 62 168 61 172 61 L188 62 L192 80 L191 112 L157 112 Z" fill="#7a726c"/>
<rect x="185" y="62" width="6" height="20" fill="#9aa4ac"/>
<path d="M169.7 62 H185 L184 84 L171 84 Z" fill="#8a1a28"/>
<ellipse cx="174.5" cy="54" rx="9.5" ry="10" fill="#c08a5a"/>
<ellipse cx="179.5" cy="56.5" rx="4.5" ry="6" fill="#d8a888"/>
<rect x="175.7" y="85.7" width="61" height="14.3" fill="#b08868"/>
<rect x="175.7" y="85.7" width="61" height="6" fill="#c4a280"/>
<path d="M160 100 L210 106 L222 126 L172 128 Z" fill="#1e2026"/>
<rect x="206" y="122" width="15" height="8" fill="#c8b8a8"/>
<rect x="157" y="112" width="39" height="5" fill="#8a5a3a"/>
<rect x="190.6" y="82" width="7" height="9" fill="#ece8e2"/>
<rect x="225" y="80" width="8" height="6" fill="#ece8e2"/>
<rect x="212" y="83" width="6" height="5" fill="#e8e4de"/>
<ellipse cx="218" cy="91" rx="8" ry="3" fill="#d8c0a0"/>
<!-- woman 2 -->
<path d="M233.7 70 C236 64 244 62 250 62 L261 63 V121.5 L236 121.5 Z" fill="#a8988a"/>
<path d="M242 62 H253 L252 103 L243 100 Z" fill="#6a3a3a"/>
<path d="M222 111 L243 108 L245 131 L222 131 Z" fill="#22222a"/>
<ellipse cx="252" cy="55" rx="9" ry="10" fill="#4a3028"/>
<ellipse cx="246.5" cy="58" rx="4.5" ry="6" fill="#c89a80"/>
<rect x="241" y="121" width="20" height="5" fill="#8a5a3a"/>
</g>
<circle cx="132" cy="47.8" r="15" fill="#000" opacity="0.15"/>
<path d="M126 40.6 L126 55 L138.6 47.8 Z" fill="#fff"/>
</svg>
</div>
<div class="b" style="left:1069.5px;top:354px;width:26px;height:26px;box-sizing:border-box;border:1px solid #edf0f5;border-radius:7px;background:#fff;"></div>
<svg class="b" style="left:1075.2px;top:359.2px" width="15.6" height="15.6" viewBox="0 0 15.6 15.6"><g transform="scale(0.52)"><path d="M15 0 H30 V30 H21.5 V15 H15 Z" fill="#00f5ff"/><path d="M15 0 A15 15 0 1 0 22.2 28.2 L16.6 21.1 Z" fill="#ff99f7"/><path d="M15 0 A15 15 0 0 1 22.2 28.2 L16.6 21.1 L15 8.4 Z" fill="#1fa5ff"/><circle cx="15.2" cy="15.1" r="6.6" fill="#fff"/></g></svg>
<div class="t" style="top:360.26px;font-size:16px;font-weight:700;color:#16178f;left:1110px;">Aimy</div>
<div class="t" style="top:389.72px;font-size:18.4px;font-weight:400;color:#101828;letter-spacing:0.1px;left:1110.3px;">Thank you for uploading your video. This meets</div>
<div class="t" style="top:416.22px;font-size:18.4px;font-weight:400;color:#101828;letter-spacing:0.1px;left:1110.3px;">requirements but may be subject to further review. We&#8217;ll</div>
<div class="t" style="top:442.82px;font-size:18.4px;font-weight:400;color:#101828;letter-spacing:0.1px;left:1110.3px;">confirm once this has network approval.</div>
<div class="t" style="top:478.82px;font-size:18.4px;font-weight:400;color:#101828;letter-spacing:0.1px;left:1110.3px;">Do you need a pixel for tracking?</div>
<div class="t" style="top:534.80px;font-size:15px;font-weight:700;color:#101828;right:86px;text-align:right;">Joshua Brooks</div>
<div class="b" style="left:1568.7px;top:527.4px;width:26.6px;height:26.6px;background:#2aa3a6;border-radius:50%;"></div>
<div class="t" style="top:535.50px;font-size:13px;font-weight:400;color:#fff;left:1182px;width:800px;text-align:center;">J</div>
<div class="b" style="left:1222.2px;top:558.5px;width:332.4px;height:44.9px;background:#f7f9fc;border-radius:10px;"></div>
<div class="t" style="top:572.52px;font-size:18.4px;font-weight:400;color:#101828;letter-spacing:0.1px;right:103px;text-align:right;">No, I do not need a pixel for tracking</div>
<div class="b" style="left:1069.5px;top:630.6px;width:26px;height:26px;box-sizing:border-box;border:1px solid #edf0f5;border-radius:7px;background:#fff;"></div>
<svg class="b" style="left:1075.2px;top:635.8000000000001px" width="15.6" height="15.6" viewBox="0 0 15.6 15.6"><g transform="scale(0.52)"><path d="M15 0 H30 V30 H21.5 V15 H15 Z" fill="#00f5ff"/><path d="M15 0 A15 15 0 1 0 22.2 28.2 L16.6 21.1 Z" fill="#ff99f7"/><path d="M15 0 A15 15 0 0 1 22.2 28.2 L16.6 21.1 L15 8.4 Z" fill="#1fa5ff"/><circle cx="15.2" cy="15.1" r="6.6" fill="#fff"/></g></svg>
<div class="t" style="top:637.06px;font-size:16px;font-weight:700;color:#16178f;left:1110px;">Aimy</div>
<div class="t" style="top:665.82px;font-size:18.4px;font-weight:400;color:#101828;letter-spacing:0.2px;left:1110.3px;">Great! Let&#8217;s confirm your information before submitting to</div>
<div class="t" style="top:692.32px;font-size:18.4px;font-weight:400;color:#101828;letter-spacing:0.1px;left:1110.3px;">be published.</div>
<div class="t" style="top:728.79px;font-size:17.5px;font-weight:700;color:#101828;left:1110.3px;">Are you ready to publish?</div>
<div class="t" style="top:784.70px;font-size:15px;font-weight:700;color:#101828;letter-spacing:0.35px;right:86px;text-align:right;">Orion Bennett</div>
<div class="b" style="left:1568.7px;top:777.1px;width:26.6px;height:26.6px;background:#ff7043;border-radius:50%;"></div>
<div class="t" style="top:785.20px;font-size:13px;font-weight:400;color:#fff;left:1182px;width:800px;text-align:center;">O</div>
<div class="b" style="left:1309.9px;top:808.5px;width:244.7px;height:44.2px;background:#e3f1fd;border-radius:10px;"></div>
<div class="t" style="top:821.42px;font-size:18.4px;font-weight:400;color:#101828;letter-spacing:0.1px;right:103px;text-align:right;">Yes, I am ready to publish</div>
<div class="t" style="top:881.16px;font-size:16px;font-weight:400;color:#5a79ab;letter-spacing:0.1px;left:1145.9px;">Campaign creation confirmed Sep 20, 2025 2:30PM</div>
<div class="b" style="left:1069.5px;top:924.8px;width:26px;height:26px;box-sizing:border-box;border:1px solid #edf0f5;border-radius:7px;background:#fff;"></div>
<svg class="b" style="left:1075.2px;top:930.0px" width="15.6" height="15.6" viewBox="0 0 15.6 15.6"><g transform="scale(0.52)"><path d="M15 0 H30 V30 H21.5 V15 H15 Z" fill="#00f5ff"/><path d="M15 0 A15 15 0 1 0 22.2 28.2 L16.6 21.1 Z" fill="#ff99f7"/><path d="M15 0 A15 15 0 0 1 22.2 28.2 L16.6 21.1 L15 8.4 Z" fill="#1fa5ff"/><circle cx="15.2" cy="15.1" r="6.6" fill="#fff"/></g></svg>
<div class="t" style="top:931.26px;font-size:16px;font-weight:700;color:#16178f;left:1110px;">Aimy</div>
<div class="t" style="top:960.02px;font-size:18.4px;font-weight:400;color:#101828;letter-spacing:0.1px;left:1110.3px;">Great! This has been submitted for review and set up. You</div>
<div class="t" style="top:986.82px;font-size:18.4px;font-weight:400;color:#101828;letter-spacing:0.04px;left:1110.3px;">will receive an email in 2&#8211;3 days confirming your campaign</div>
<div class="t" style="top:1013.02px;font-size:18.4px;font-weight:400;color:#101828;letter-spacing:0.1px;left:1110.3px;">in live.</div>
</div></div>
</body></html>
